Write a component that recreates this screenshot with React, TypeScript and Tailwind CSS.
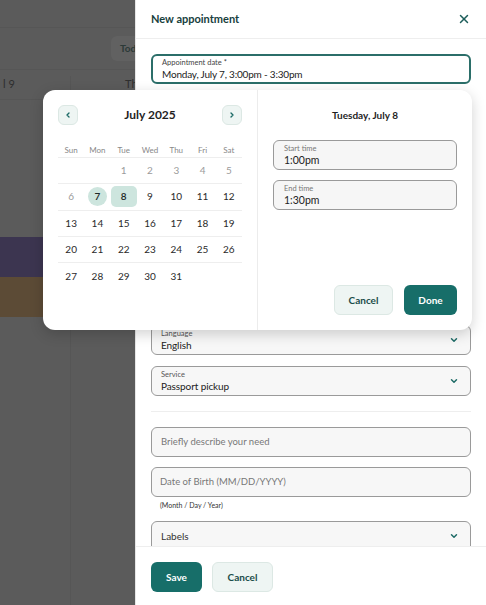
import { ChevronDown, ChevronLeft, ChevronRight, X } from 'lucide-react';

const weekdays = ['Sun', 'Mon', 'Tue', 'Wed', 'Thu', 'Fri', 'Sat'];

// July 2025 starts on a Tuesday; leading cells are June 29/30 (blank)
const weeks: (number | null)[][] = [
  [null, null, 1, 2, 3, 4, 5],
  [6, 7, 8, 9, 10, 11, 12],
  [13, 14, 15, 16, 17, 18, 19],
  [20, 21, 22, 23, 24, 25, 26],
  [27, 28, 29, 30, 31, null, null],
];

function Backdrop() {
  return (
    <div className="absolute inset-0 flex flex-col bg-[#5b5b5b]">
      <div className="h-[28px] border-b border-[#565656]" />
      <div className="flex h-[42px] items-center border-b border-[#565656] pl-[111px]">
        <div className="rounded-md bg-[#616161] px-[9px] py-[5px] text-[10px] font-bold text-[#2c3a38]">Today</div>
      </div>
      <div className="flex h-[30px] items-center border-b border-[#565656] text-[11px] text-[#2e2e2e]">
        <div className="w-[70px] pl-[3px]">l 9</div>
        <div className="flex-1 border-l border-[#565656] pl-[54px]">Th</div>
      </div>
      <div className="flex flex-1">
        <div className="flex w-[70px] flex-col">
          <div className="h-[137px]" />
          <div className="h-[40px] bg-[#3c3550]" />
          <div className="h-[40px] bg-[#5c4b36]" />
        </div>
        <div className="flex flex-1 flex-col border-l border-[#565656]">
          <div className="h-[137px]" />
          <div className="h-[40px] bg-[#3c3550]" />
          <div className="h-[40px] bg-[#5c4b36]" />
        </div>
      </div>
    </div>
  );
}

function Field({ label, value, className = '' }: { label: string; value: string; className?: string }) {
  return (
    <div className={`flex h-[30px] items-center rounded-md border border-[#9a9a9a] bg-[#f7f7f7] pl-[9px] pr-[11px] ${className}`}>
      <div className="flex flex-1 flex-col leading-none">
        <span className="text-[7.5px] text-[#555]">{label}</span>
        <span className="mt-[3px] text-[10px] tracking-[-0.1px] text-[#222]">{value}</span>
      </div>
      <ChevronDown size={10} strokeWidth={3.5} className="text-[#1d6b66]" />
    </div>
  );
}

function Calendar() {
  return (
    <div className="w-[215px] border-r border-[#ececec] p-[15px]">
      <div className="flex h-[20px] items-center justify-between">
        <button className="flex h-[20px] w-[20px] items-center justify-center rounded-md border border-[#dce8e4] bg-[#eef5f3] text-[#1d6b66]">
          <ChevronLeft size={8} strokeWidth={4} />
        </button>
        <span className="text-[12px] font-bold text-[#1f1f1f]">July 2025</span>
        <button className="flex h-[20px] w-[20px] items-center justify-center rounded-md border border-[#dce8e4] bg-[#eef5f3] text-[#1d6b66]">
          <ChevronRight size={8} strokeWidth={4} />
        </button>
      </div>
      <div className="mt-[19px] grid grid-cols-7 border-b border-[#eeeeee] pb-[1px]">
        {weekdays.map((d) => (
          <div key={d} className="text-center text-[8px] leading-[12px] text-[#888]">
            {d}
          </div>
        ))}
      </div>
      {weeks.map((week, wi) => (
        <div
          key={wi}
          className={`grid h-[26.3px] grid-cols-7 items-center ${wi < weeks.length - 1 ? 'border-b border-[#eeeeee]' : ''}`}
        >
          {week.map((day, di) => {
            const muted = day !== null && day <= 6;
            return (
              <div key={di} className="flex items-center justify-center">
                {day === 7 ? (
                  <span className="flex h-[19px] w-[19px] items-center justify-center rounded-full bg-[#cde5de] text-[10px] font-semibold text-[#1f2a28]">
                    7
                  </span>
                ) : day === 8 ? (
                  <span className="flex h-[21px] w-[26px] items-center justify-center rounded-[5px] bg-[#cde5de] text-[10px] font-semibold text-[#1f2a28]">
                    8
                  </span>
                ) : (
                  <span className={`text-[10px] ${muted ? 'text-[#9b9b9b]' : 'text-[#2a2a2a]'}`}>{day ?? ''}</span>
                )}
              </div>
            );
          })}
        </div>
      ))}
    </div>
  );
}

function TimeField({ label, value }: { label: string; value: string }) {
  return (
    <div className="flex h-[30px] flex-col justify-center rounded-md border border-[#9a9a9a] bg-[#f6f6f6] pl-[10px] leading-none">
      <span className="text-[7.5px] text-[#777]">{label}</span>
      <span className="mt-[3px] text-[10.5px] text-[#222]">{value}</span>
    </div>
  );
}

function Popover() {
  return (
    <div className="absolute left-[43px] top-[90px] flex h-[240px] w-[429px] rounded-[12px] bg-white shadow-[0_4px_14px_rgba(0,0,0,0.18)]">
      <Calendar />
      <div className="flex flex-1 flex-col p-[15px]">
        <div className="flex h-[20px] items-center justify-center text-[10px] font-bold text-[#1f1f1f]">
          Tuesday, July 8
        </div>
        <div className="mt-[15px] flex flex-col gap-[10px]">
          <TimeField label="Start time" value="1:00pm" />
          <TimeField label="End time" value="1:30pm" />
        </div>
        <div className="mt-auto flex justify-end gap-[11px]">
          <button className="h-[30px] w-[59px] rounded-md border border-[#dce8e4] bg-[#eef5f3] text-[10px] font-bold text-[#1a4d4a]">
            Cancel
          </button>
          <button className="h-[30px] w-[53px] rounded-md bg-[#176e69] text-[10px] font-bold text-white">
            Done
          </button>
        </div>
      </div>
    </div>
  );
}

export default function App() {
  return (
    <div className="relative h-[605px] w-[486px] overflow-hidden font-['Lato',sans-serif]">
      <Backdrop />
      <div className="absolute right-0 top-0 flex h-full w-[351px] flex-col border-l border-[#e6e6e6] bg-white">
        <div className="flex h-[39px] shrink-0 items-center justify-between border-b border-[#eeeeee] px-[15px]">
          <h2 className="text-[11px] font-bold text-[#17403d]">New appointment</h2>
          <X size={14} strokeWidth={2.5} className="text-[#1d5e5a]" />
        </div>
        <div className="flex flex-1 flex-col overflow-hidden px-[15px] pt-[15px]">
          <div className="flex h-[30px] shrink-0 flex-col justify-center rounded-md border-2 border-[#2b6e69] pl-[9px] leading-none">
            <span className="text-[7.5px] text-[#444]">Appointment date *</span>
            <span className="mt-[3px] text-[10px] tracking-[-0.2px] text-[#222]">Monday, July 7, 3:00pm - 3:30pm</span>
          </div>
          <div className="h-[241px] shrink-0" />
          <Field label="Language" value="English" className="shrink-0" />
          <Field label="Service" value="Passport pickup" className="mt-[11px] shrink-0" />
          <div className="my-[15px] h-px shrink-0 bg-[#eeeeee]" />
          <div className="flex h-[30px] shrink-0 items-center rounded-md border border-[#9a9a9a] bg-[#f7f7f7] pl-[9px] text-[9.5px] text-[#777]">
            Briefly describe your need
          </div>
          <div className="mt-[10px] flex h-[30px] shrink-0 items-center rounded-md border border-[#9a9a9a] bg-[#f7f7f7] pl-[8px] text-[9.5px] text-[#777]">
            Date of Birth (MM/DD/YYYY)
          </div>
          <div className="mt-[3px] shrink-0 pl-[9px] text-[7px] text-[#333]">(Month / Day / Year)</div>
          <div className="mt-[10px] flex h-[31px] shrink-0 items-center rounded-md border border-[#9a9a9a] bg-[#f7f7f7] pl-[9px] pr-[11px]">
            <span className="flex-1 text-[10px] text-[#333]">Labels</span>
            <ChevronDown size={10} strokeWidth={3.5} className="text-[#1d6b66]" />
          </div>
        </div>
        <div className="flex h-[59px] shrink-0 items-start gap-[10px] border-t border-[#eeeeee] bg-white px-[15px] pt-[15px]">
          <button className="h-[30px] w-[51px] rounded-md bg-[#176e69] text-[10px] font-bold text-white">Save</button>
          <button className="h-[30px] w-[61px] rounded-md border border-[#dce8e4] bg-[#eef5f3] text-[10px] font-bold text-[#1a4d4a]">
            Cancel
          </button>
        </div>
      </div>
      <Popover />
    </div>
  );
}
